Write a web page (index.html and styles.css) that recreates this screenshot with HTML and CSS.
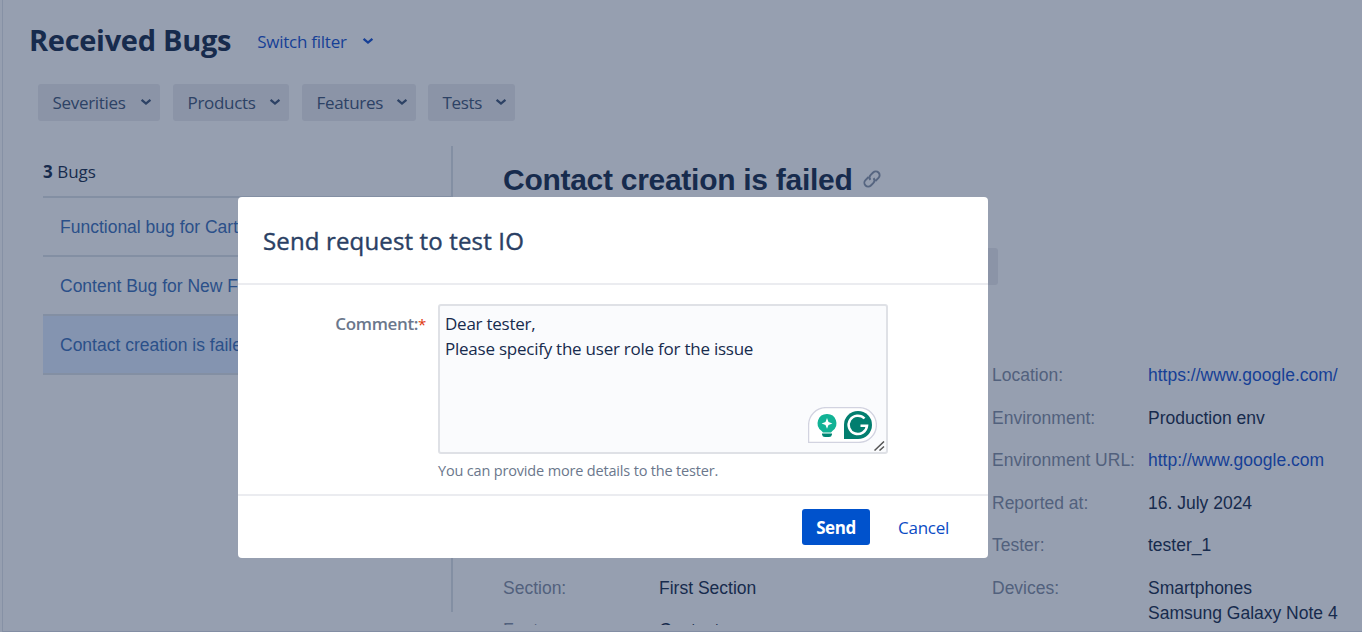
FILE: index.html
```html
<!DOCTYPE html>
<html lang="en">
<head>
<meta charset="utf-8">
<title>Received Bugs</title>
<link rel="stylesheet" href="styles.css">
</head>
<body>
<div class="page">
  <header class="page-header">
    <h1 class="page-title">Received Bugs</h1>
    <a class="switch">Switch filter<svg class="chev" viewBox="0 0 12 8"><path d="M1.600 1.800 6 5.600 10.400 1.800"/></svg></a>
  </header>
  <nav class="filters">
    <button class="filter severities">Severities<svg class="chev" viewBox="0 0 12 8"><path d="M1.600 1.800 6 5.600 10.400 1.800"/></svg></button>
    <button class="filter products">Products<svg class="chev" viewBox="0 0 12 8"><path d="M1.600 1.800 6 5.600 10.400 1.800"/></svg></button>
    <button class="filter features">Features<svg class="chev" viewBox="0 0 12 8"><path d="M1.600 1.800 6 5.600 10.400 1.800"/></svg></button>
    <button class="filter tests">Tests<svg class="chev" viewBox="0 0 12 8"><path d="M1.600 1.800 6 5.600 10.400 1.800"/></svg></button>
  </nav>
  <main class="content">
    <section class="bugs">
      <div class="count"><b>3</b> Bugs</div>
      <ul class="bug-list">
        <li class="bug">Functional bug for Cart</li>
        <li class="bug">Content Bug for New Feature</li>
        <li class="bug selected">Contact creation is failed</li>
      </ul>
    </section>
    <article class="detail">
      <h2 class="detail-title">Contact creation is failed
        <svg class="link" viewBox="0 0 18 18"><g transform="rotate(-45 9 9)"><path d="M8 5.200H3.600a3.800 3.800 0 0 0 0 7.600H7a3.800 3.800 0 0 0 3.800-3.300"/><path d="M10 12.800h4.400a3.800 3.800 0 0 0 0-7.600H11a3.800 3.800 0 0 0-3.800 3.300"/></g></svg>
      </h2>
      <div class="actions"><span class="action"></span></div>
      <div class="facts">
        <dl class="col left">
          <dt>Section:</dt><dd>First Section</dd>
          <dt>Feature:</dt><dd>Contacts</dd>
        </dl>
        <dl class="col right">
          <dt>Location:</dt><dd><a>https://www.google.com/</a></dd>
          <dt>Environment:</dt><dd>Production env</dd>
          <dt>Environment URL:</dt><dd><a>http://www.google.com</a></dd>
          <dt>Reported at:</dt><dd>16. July 2024</dd>
          <dt>Tester:</dt><dd>tester_1</dd>
          <dt>Devices:</dt><dd>Smartphones<br>Samsung Galaxy Note 4</dd>
        </dl>
      </div>
    </article>
  </main>
</div>
<div class="modal" role="dialog">
  <header class="modal-head">Send request to test IO</header>
  <div class="modal-body">
    <label class="label">Comment:<i>*</i></label>
    <div class="field">
      <div class="textarea">Dear tester,<br>Please specify the user role for the issue
        <div class="assist">
          <svg viewBox="0 0 69 36"><path d="M.6 35.400V18A17.400 17.400 0 0 1 18 .6h33a17.400 17.400 0 0 1 0 34.800z" fill="#fff" stroke="#d2d3e0" stroke-width="1.300"/><path d="M19 7a9.300 9.300 0 0 0-5.600 16.800L15 25.500h8l1.600-1.700A9.300 9.300 0 0 0 19 7z" fill="#12b295"/><path d="M19 11l1.500 3.900 3.900 1.500-3.900 1.500L19 21.800l-1.500-3.900-3.900-1.500 3.900-1.500z" fill="#fff"/><path d="M14 26.500h10v1a3 3 0 0 1-3 2.500h-4a3 3 0 0 1-3-2.500z" fill="#008573"/><path d="M36 32V18a14 14 0 1 1 14 14z" fill="#027e6f"/><path d="M56.500 11.500A9.200 9.200 0 1 0 59 18.800H52.500" fill="none" stroke="#fff" stroke-width="2.500"/></svg>
        </div>
        <svg class="grip" viewBox="0 0 11 10"><path d="M.5 9.500 10 .5M5.500 9.500 10 5.500" /></svg>
      </div>
      <p class="hint">You can provide more details to the tester.</p>
    </div>
  </div>
  <footer class="modal-foot"><button class="send">Send</button><a class="cancel">Cancel</a></footer>
</div>
</body>
</html>
```
FILE: styles.css
```css
* { box-sizing: border-box; margin: 0; padding: 0; }
body { width: 1362px; height: 632px; overflow: hidden; background: #969fb0; color: #172b4d; font-family: "Open Sans", "Noto Sans", sans-serif; font-size: 17px; letter-spacing: -0.24px; position: relative; }
.page { height: 632px; margin-left: 2px; border-left: 1px solid #8691a5; border-bottom: 1px solid #838ea4; overflow: hidden; }
.page-header { display: flex; align-items: center; height: 84px; padding: 0 0 4px 26px; gap: 26px; }
.page-title { font-size: 29px; line-height: 40px; font-weight: 700; letter-spacing: -0.3px; }
.switch { display: flex; align-items: center; gap: 15px; padding-top: 2px; color: #163f96; }
.switch .chev { margin-bottom: 0; }
.chev { width: 12px; height: 8px; margin-bottom: 2px; fill: none; stroke: currentColor; stroke-width: 2.3; }
.filters { display: flex; gap: 13px; padding-left: 35px; height: 37px; }
.filter { display: flex; align-items: center; justify-content: space-between; padding: 0 8px 0 14.5px; height: 37px; border: 0; border-radius: 3px; background: #8b94a7; color: #2d4265; font: inherit; letter-spacing: -0.3px; }
.severities { width: 122px; }
.products { width: 116px; }
.features { width: 114px; }
.tests { width: 87px; margin-left: -1px; }
.content { display: flex; margin-top: 25px; height: 479px; overflow: hidden; font-family: "Liberation Sans", Arial, sans-serif; font-size: 17.5px; letter-spacing: 0; }
.bugs { width: 410px; height: 466px; margin-left: 40px; border-right: 2px solid #838fa3; }
.count { height: 52px; line-height: 52px; border-bottom: 2px solid #838fa3; font-family: "Open Sans", "Noto Sans", sans-serif; font-size: 17px; }
.bug-list { list-style: none; }
.bug { height: 59px; line-height: 59px; padding-left: 17px; border-bottom: 2px solid #838fa3; color: #2b5089; white-space: nowrap; }
.selected { background: #8494b0; }
.detail { padding-left: 50px; width: 908px; }
.detail-title { display: flex; align-items: center; gap: 11px; font-size: 30px; letter-spacing: -0.28px; line-height: 36px; padding-top: 16px; }
.link { width: 18px; height: 18px; margin-bottom: 2px; fill: none; stroke: #566580; stroke-width: 1.9; }
.actions { display: flex; padding: 50px 0 0 395px; }
.action { width: 100px; height: 37px; background: #8b94a7; border-radius: 3px; }
.facts { display: grid; grid-template-columns: 489px 1fr; margin-top: 78px; }
.col { display: grid; grid-template-columns: 156px 1fr; row-gap: 17.5px; line-height: 25px; align-content: start; }
.left { padding-top: 213px; row-gap: 16.5px; }
dt { color: #52617d; }
dd a { color: #163f96; }
.modal { position: absolute; left: 238px; top: 197px; width: 750px; height: 361px; border-radius: 4px; background: #fff; }
.modal-head { height: 88px; line-height: 88px; padding-left: 25px; border-bottom: 2px solid #ebecf0; font-size: 24px; letter-spacing: 0.15px; color: #2a3f64; -webkit-text-stroke: 0.4px #2a3f64; }
.modal-body { display: flex; height: 211px; padding-top: 19px; border-bottom: 2px solid #ebecf0; }
.label { width: 188px; margin-right: 12px; text-align: right; line-height: 40px; font-weight: 600; letter-spacing: -0.35px; color: #6b778c; }
.label i { color: #de350b; font-style: normal; font-weight: 400; font-size: 15px; }
.field { width: 450px; }
.textarea { position: relative; height: 150px; padding: 5px; border: 2px solid #dfe1e6; border-radius: 3px; background: #fafbfd; line-height: 25px; }
.assist { position: absolute; right: 9px; bottom: 9px; width: 69px; height: 36px; }
.assist svg { display: block; }
.grip { position: absolute; right: 1px; bottom: 1px; width: 11px; height: 10px; stroke: #555; stroke-width: 1.5; }
.hint { font-size: 14.5px; letter-spacing: -0.17px; line-height: 34px; color: #6b778c; }
.modal-foot { display: flex; align-items: center; height: 62px; padding: 0 0 0 564px; gap: 28px; }
.send { flex: none; width: 68px; height: 36px; border: 0; border-radius: 3px; background: #0052cc; color: #fff; font: inherit; font-weight: 700; letter-spacing: -0.4px; }
.cancel { color: #0b4bc4; }
```
